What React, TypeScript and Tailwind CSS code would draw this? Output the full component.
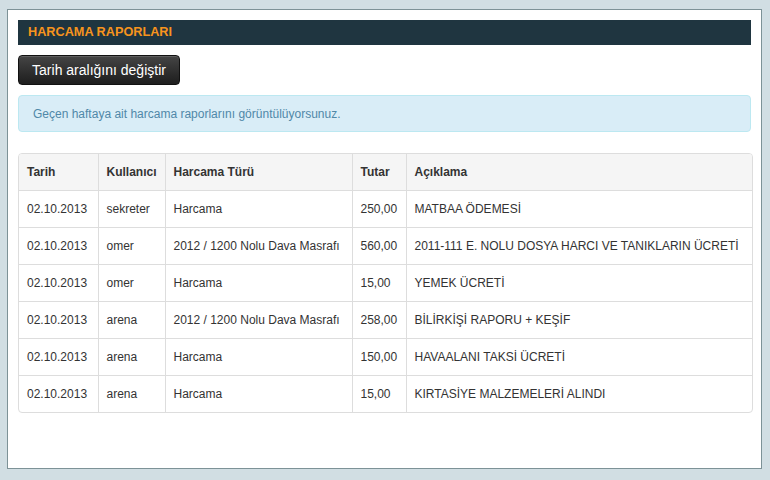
const rows = [
  { tarih: '02.10.2013', kullanici: 'sekreter', tur: 'Harcama', tutar: '250,00', aciklama: 'MATBAA ÖDEMESİ' },
  { tarih: '02.10.2013', kullanici: 'omer', tur: '2012 / 1200 Nolu Dava Masrafı', tutar: '560,00', aciklama: '2011-111 E. NOLU DOSYA HARCI VE TANIKLARIN ÜCRETİ' },
  { tarih: '02.10.2013', kullanici: 'omer', tur: 'Harcama', tutar: '15,00', aciklama: 'YEMEK ÜCRETİ' },
  { tarih: '02.10.2013', kullanici: 'arena', tur: '2012 / 1200 Nolu Dava Masrafı', tutar: '258,00', aciklama: 'BİLİRKİŞİ RAPORU + KEŞİF' },
  { tarih: '02.10.2013', kullanici: 'arena', tur: 'Harcama', tutar: '150,00', aciklama: 'HAVAALANI TAKSİ ÜCRETİ' },
  { tarih: '02.10.2013', kullanici: 'arena', tur: 'Harcama', tutar: '15,00', aciklama: 'KIRTASİYE MALZEMELERİ ALINDI' },
];

const cell = 'px-[8px] py-[8px] leading-[20px] text-left align-top whitespace-nowrap overflow-hidden';

export default function App() {
  return (
    <div className="w-[770px] h-[480px] bg-[#d1dee3] pt-[9px] pl-[7px] font-['Liberation_Sans',Arial,sans-serif] text-[#333]">
      <div className="w-[755px] h-[460px] bg-white border border-[#7d9297] p-[10px]">
        <div className="h-[25px] bg-[#1f3540] flex items-center px-[10px]">
          <h1 className="text-[12.7px] font-bold text-[#f7941d]">HARCAMA RAPORLARI</h1>
        </div>

        <button
          type="button"
          className="mt-[10px] h-[30px] w-[162px] rounded-[4px] border border-[#111] bg-gradient-to-b from-[#454545] to-[#1e1e1e] text-white text-[14px] shadow-[inset_0_1px_0_rgba(255,255,255,0.15)]"
        >
          Tarih aralığını değiştir
        </button>

        <div className="mt-[10px] h-[37px] rounded-[4px] border border-[#bce8f1] bg-[#d9edf7] px-[14px] flex items-center text-[12px] text-[#5088a8]">
          Geçen haftaya ait harcama raporlarını görüntülüyorsunuz.
        </div>

        <div className="mt-[21px] w-[735px] border border-[#ddd] rounded-[4px] overflow-hidden">
          <table className="w-full table-fixed border-collapse text-[12px]">
            <colgroup>
              <col className="w-[79px]" />
              <col className="w-[67px]" />
              <col className="w-[187px]" />
              <col className="w-[54px]" />
              <col />
            </colgroup>
            <thead>
              <tr className="bg-[#f5f5f5]">
                <th className={`${cell} font-bold`}>Tarih</th>
                <th className={`${cell} font-bold border-l border-[#ddd]`}>Kullanıcı</th>
                <th className={`${cell} font-bold border-l border-[#ddd]`}>Harcama Türü</th>
                <th className={`${cell} font-bold border-l border-[#ddd]`}>Tutar</th>
                <th className={`${cell} font-bold border-l border-[#ddd]`}>Açıklama</th>
              </tr>
            </thead>
            <tbody>
              {rows.map((r, i) => (
                <tr key={i} className="border-t border-[#ddd]">
                  <td className={cell}>{r.tarih}</td>
                  <td className={`${cell} border-l border-[#ddd]`}>{r.kullanici}</td>
                  <td className={`${cell} border-l border-[#ddd]`}>{r.tur}</td>
                  <td className={`${cell} border-l border-[#ddd]`}>{r.tutar}</td>
                  <td className={`${cell} border-l border-[#ddd]`}>{r.aciklama}</td>
                </tr>
              ))}
            </tbody>
          </table>
        </div>
      </div>
    </div>
  );
}
